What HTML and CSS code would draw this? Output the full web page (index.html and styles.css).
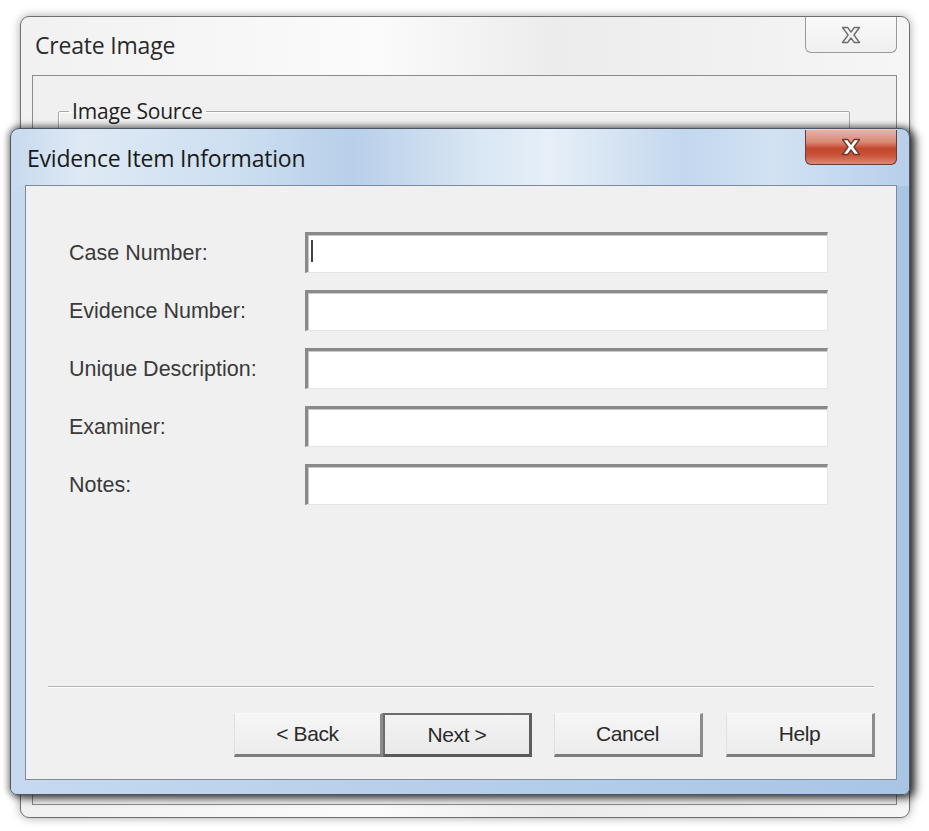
FILE: index.html
```html
<!DOCTYPE html>
<html>
<head>
<meta charset="utf-8">
<title>Evidence Item Information</title>
<link rel="stylesheet" href="styles.css">
</head>
<body>
<div class="desktop">
  <div class="win back">
    <div class="titlebar">
      <span class="title">Create Image</span>
      <div class="close inactive">
        <svg width="22" height="18" viewBox="0 0 22 18"><path d="M2.5 1.5h5.2l3.3 4.6 3.3-4.6h5.2l-5.6 7.5 5.6 7.5h-5.2l-3.3-4.6-3.3 4.6H2.5l5.6-7.5z" fill="#f4f4f4" stroke="#6e6e6e" stroke-width="1.4" stroke-linejoin="round"/></svg>
      </div>
    </div>
    <div class="client">
      <fieldset class="group"><legend>Image Source</legend></fieldset>
    </div>
  </div>

  <div class="win front">
    <div class="titlebar">
      <span class="title">Evidence Item Information</span>
      <div class="close active">
        <svg width="22" height="18" viewBox="0 0 22 18"><path d="M2.5 1.5h5.2l3.3 4.6 3.3-4.6h5.2l-5.6 7.5 5.6 7.5h-5.2l-3.3-4.6-3.3 4.6H2.5l5.6-7.5z" fill="#ffffff" stroke="#6a3a30" stroke-width="1.3" stroke-linejoin="round"/></svg>
      </div>
    </div>
    <div class="client">
      <div class="form">
        <label class="lbl">Case Number:</label>
        <div class="field"><span class="caret"></span></div>
        <label class="lbl">Evidence Number:</label>
        <div class="field"></div>
        <label class="lbl">Unique Description:</label>
        <div class="field"></div>
        <label class="lbl">Examiner:</label>
        <div class="field"></div>
        <label class="lbl">Notes:</label>
        <div class="field"></div>
      </div>
      <div class="sep"></div>
      <div class="buttons">
        <button class="btn">&lt; Back</button>
        <button class="btn default">Next &gt;</button>
        <button class="btn cancel">Cancel</button>
        <button class="btn help">Help</button>
      </div>
    </div>
  </div>
</div>
</body>
</html>
```

FILE: styles.css
```css
* { box-sizing: border-box; }
html, body { margin: 0; padding: 0; background: #ffffff; }
body { font-family: "Liberation Sans", Arial, sans-serif; }

.desktop {
  position: relative;
  width: 929px;
  height: 831px;
  overflow: hidden;
  background: #ffffff;
}

.win {
  position: absolute;
  display: flex;
  flex-direction: column;
}

/* ---------- back window ---------- */
.back {
  left: 20px;
  top: 16px;
  width: 890px;
  height: 802px;
  border: 1px solid #6f6f6f;
  border-radius: 9px;
  background: linear-gradient(90deg, #f1f1f1 0%, #fbfbfb 40%, #ececec 60%, #f6f6f6 100%);
  box-shadow: 0 0 10px rgba(0,0,0,0.35);
  padding: 0 12px 12px 11px;
}

.titlebar {
  position: relative;
  display: flex;
  align-items: center;
  flex: none;
}
.back .titlebar { height: 58px; padding-left: 3px; padding-bottom: 2px; }
.title {
  font-family: "Open Sans", "Noto Sans", sans-serif;
  color: #1e1e1e;
  font-size: 23px;
  letter-spacing: -0.2px;
}
.back .title { color: #2a2a2a; }

.close {
  position: absolute;
  display: flex;
  align-items: center;
  justify-content: center;
  width: 92px;
}
.close.inactive {
  right: 0;
  top: 0;
  height: 36px;
  border: 1px solid #9a9a9a;
  border-top: none;
  border-radius: 0 0 6px 6px;
  background: linear-gradient(#fafafa, #efefef);
}

.back .client {
  flex: 1;
  border: 1px solid #8c8c8c;
  background: #f0f0f0;
  padding: 23px 46px 0 25px;
}
.group {
  margin: 0;
  height: 220px;
  border: 1px solid #a8a8a8;
  border-radius: 2px;
  box-shadow: 1px 1px 0 #ffffff inset;
  padding: 0;
}
.group legend {
  margin-left: 10px;
  padding: 0 3px;
  font-family: "Open Sans", "Noto Sans", sans-serif;
  font-size: 21px;
  line-height: 24px;
  letter-spacing: -0.2px;
  color: #222;
}

/* ---------- front window ---------- */
.front {
  left: 10px;
  top: 128px;
  width: 900px;
  height: 667px;
  border: 1px solid #4b5563;
  border-radius: 9px 9px 7px 7px;
  background:
    linear-gradient(90deg, #c7daef 0%, #dfe9f5 8%, #cddff1 25%, #b8cfe9 38%, #d9e6f4 52%, #e7eff8 60%, #c3d7ee 75%, #d2e2f3 85%, #b7cfea 100%);
  box-shadow: 0 0 6px 2px rgba(0,0,0,0.45), 6px 3px 10px rgba(0,0,0,0.6);
  padding: 0 12px 14px 14px;
}
.front::before {
  content: "";
  position: absolute;
  left: 0; right: 0; top: 57px; bottom: 0;
  border-radius: 0 0 7px 7px;
  background: linear-gradient(90deg, #c6d9ef 0%, #b9d0ea 40%, #a9c5e6 100%);
  z-index: 0;
}
.front .titlebar { height: 56px; padding-left: 2px; z-index: 1; }
.front .title { color: #1a1a1a; padding-top: 1px; }
.close.active {
  right: 0;
  top: 1px;
  height: 35px;
  border: 1px solid #6b3a32;
  border-top: none;
  border-radius: 0 0 6px 6px;
  background: linear-gradient(180deg, #e8b3a5 0%, #d98a77 35%, #c4452c 55%, #c9543b 75%, #dc8a77 100%);
}

.front .client {
  position: relative;
  z-index: 1;
  flex: 1;
  border: 1px solid #7d8a99;
  background: #f0f0f0;
  display: flex;
  flex-direction: column;
}

.form {
  display: grid;
  grid-template-columns: 236px 523px;
  grid-auto-rows: 41px;
  row-gap: 17px;
  padding: 46px 0 0 43px;
}
.lbl {
  display: flex;
  align-items: center;
  font-size: 21.5px;
  letter-spacing: 0;
  color: #3a3a3a;
  padding-top: 2px;
}
.field {
  position: relative;
  background: #ffffff;
  border-style: solid;
  border-width: 3px 1px 1px 3px;
  border-color: #8a8a8a #e4e4e4 #e4e4e4 #8a8a8a;
  box-shadow: inset 1px 1px 0 #c8c8c8;
}
.caret {
  position: absolute;
  left: 3px;
  top: 5px;
  width: 2px;
  height: 22px;
  background: #444;
}

.sep {
  margin: 181px 22px 0 22px;
  height: 2px;
  border-top: 1px solid #b4b4b4;
  border-bottom: 1px solid #ffffff;
}

.buttons {
  display: flex;
  justify-content: flex-end;
  padding: 25px 21px 0 0;
}
.btn {
  width: 149px;
  height: 44px;
  font-family: "Liberation Sans", Arial, sans-serif;
  font-size: 21px;
  letter-spacing: -0.4px;
  color: #2a2a2a;
  background: linear-gradient(#f6f6f6, #ececec);
  border-style: solid;
  border-width: 1px 3px 3px 1px;
  border-color: #fafafa #8c8c8c #7c7c7c #e0e0e0;
  padding: 0;
  border-radius: 0;
}
.btn.default {
  border-width: 2px 3px 3px 2px;
  border-color: #6c6c6c #5e5e5e #5a5a5a #6c6c6c;
  background: linear-gradient(#f3f3f3, #e9e9e9);
}
.btn.cancel { margin-left: 22px; }
.btn.help { margin-left: 23px; }
```
